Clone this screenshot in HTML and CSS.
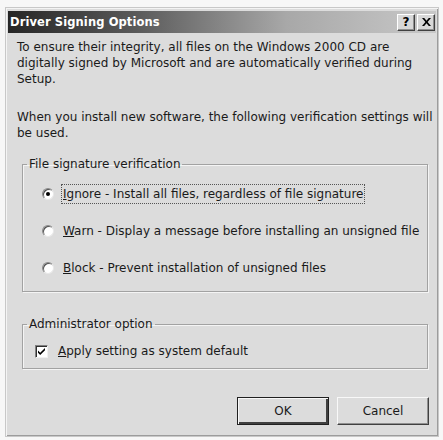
FILE: index.html
```html
<!DOCTYPE html>
<html>
<head>
<meta charset="utf-8">
<link rel="stylesheet" href="styles.css">
</head>
<body>
<div class="window">
  <div class="titlebar">
    <span class="title">Driver Signing Options</span>
    <div class="tbuttons">
      <span class="tbtn help">?</span>
      <span class="tbtn close">
        <svg width="9" height="8" viewBox="0 0 9 8"><path d="M0 0h2.2l2.3 2.8L6.8 0H9L5.6 4 9 8H6.8L4.5 5.2 2.2 8H0l3.4-4z" fill="#000"/></svg>
      </span>
    </div>
  </div>
  <div class="content">
    <p class="para">To ensure their integrity, all files on the Windows 2000 CD are<br>digitally signed by Microsoft and are automatically verified during<br>Setup.</p>
    <p class="para p2">When you install new software, the following verification settings will<br>be used.</p>
    <fieldset class="group g1">
      <legend>File signature verification</legend>
      <div class="opt">
        <span class="radio on"></span>
        <span class="label focus"><u>I</u>gnore - Install all files, regardless of file signature</span>
      </div>
      <div class="opt">
        <span class="radio"></span>
        <span class="label"><u>W</u>arn - Display a message before installing an unsigned file</span>
      </div>
      <div class="opt">
        <span class="radio"></span>
        <span class="label"><u>B</u>lock - Prevent installation of unsigned files</span>
      </div>
    </fieldset>
    <fieldset class="group g2">
      <legend>Administrator option</legend>
      <div class="opt chk">
        <span class="checkbox">
          <svg width="9" height="9" viewBox="0 0 9 9"><path d="M1 3.5l2.2 2.2L8 1v2.2L3.2 8 1 5.7z" fill="#000"/></svg>
        </span>
        <span class="label"><u>A</u>pply setting as system default</span>
      </div>
    </fieldset>
    <div class="buttons">
      <button class="btn default">OK</button>
      <button class="btn">Cancel</button>
    </div>
  </div>
</div>
</body>
</html>
```
FILE: styles.css
```css
html, body {
  margin: 0;
  padding: 0;
  background: #f7f7f7;
}
body {
  width: 443px;
  height: 440px;
  overflow: hidden;
  font-family: "DejaVu Sans", Verdana, sans-serif;
  font-size: 12px;
  color: #1a1a1a;
}
.window {
  margin: 7px 0 0 5px;
  width: 434px;
  height: 430px;
  box-sizing: border-box;
  background: #dcdcdc;
  border: 1px solid #c8c8c8;
  box-shadow: inset 1px 1px 0 #f4f4f4, inset -1px -1px 0 #9c9c9c;
  padding: 3px 2px 2px 2px;
  display: flex;
  flex-direction: column;
}
.titlebar {
  height: 22px;
  flex: none;
  background: linear-gradient(to right, #262626 0%, #5a5a5a 30%, #a8a8a8 65%, #c8c8c8 100%);
  display: flex;
  align-items: center;
  justify-content: space-between;
  padding: 0 1px 0 2px;
}
.title {
  color: #fff;
  font-weight: bold;
  font-size: 11.5px;
  letter-spacing: 0.1px;
}
.tbuttons {
  display: flex;
  gap: 2px;
}
.tbtn {
  width: 18px;
  height: 17px;
  box-sizing: border-box;
  background: #d8d8d8;
  border: 1px solid;
  border-color: #fff #404040 #404040 #fff;
  box-shadow: inset -1px -1px 0 #909090;
  display: flex;
  align-items: center;
  justify-content: center;
  font-weight: bold;
  font-size: 12px;
  color: #000;
}
.content {
  padding: 6px 9px 0 9px;
  flex: 1;
}
.para {
  margin: 0;
  line-height: 16px;
  width: 414px;
  white-space: nowrap;
}
.p2 {
  margin-top: 22px;
}
.group {
  margin: 15px 0 0 5px;
  width: 406px;
  box-sizing: border-box;
  border: 1px solid #a2a2a2;
  box-shadow: inset 1px 1px 0 #f4f4f4, 1px 1px 0 #f4f4f4;
  padding: 0 0 0 0;
}
.group legend {
  padding: 0 2px;
  margin-left: 4px;
  line-height: 16px;
}
.g1 {
  height: 136px;
  padding-top: 12px;
}
.g2 {
  margin-top: 24px;
  height: 53px;
  padding-top: 9px;
}
.opt {
  display: flex;
  align-items: center;
  height: 20px;
  margin-left: 19px;
  margin-bottom: 17px;
}
.chk {
  margin-left: 12px;
}
.radio {
  width: 12px;
  height: 12px;
  border-radius: 50%;
  background: #fff;
  box-sizing: border-box;
  border: 1px solid;
  border-color: #8a8a8a #e8e8e8 #e8e8e8 #8a8a8a;
  box-shadow: inset 1px 1px 0 #505050;
  margin-right: 8px;
  position: relative;
  flex: none;
}
.radio.on::after {
  content: "";
  position: absolute;
  left: 3px;
  top: 3px;
  width: 4px;
  height: 4px;
  border-radius: 50%;
  background: #000;
}
.checkbox {
  width: 13px;
  height: 13px;
  box-sizing: border-box;
  background: #fff;
  border: 1px solid;
  border-color: #808080 #f0f0f0 #f0f0f0 #808080;
  box-shadow: inset 1px 1px 0 #303030;
  display: flex;
  align-items: center;
  justify-content: center;
  margin-right: 9px;
  flex: none;
}
.label {
  line-height: 16px;
  padding: 1px 1px;
  white-space: nowrap;
}
.focus {
  outline: 1px dotted #555;
}
.buttons {
  display: flex;
  justify-content: flex-end;
  gap: 8px;
  margin-top: 28px;
  width: 412px;
}
.btn {
  width: 92px;
  height: 28px;
  box-sizing: border-box;
  background: #dcdcdc;
  font-family: "DejaVu Sans", Verdana, sans-serif;
  font-size: 12px;
  color: #1a1a1a;
  border: 1px solid;
  border-color: #f8f8f8 #404040 #404040 #f8f8f8;
  box-shadow: inset -1px -1px 0 #909090;
  padding: 0;
}
.btn.default {
  border: 1px solid #202020;
  box-shadow: inset 1px 1px 0 #f8f8f8, inset -2px -2px 0 #404040;
}
```
